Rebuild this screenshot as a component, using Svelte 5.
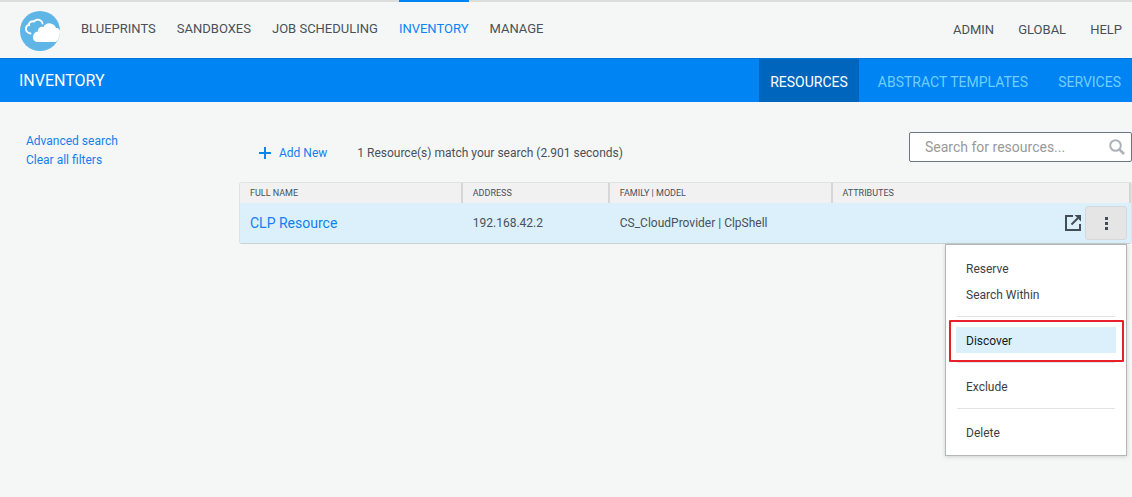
<script>
	let search = '';
	let menuOpen = true;

	const mainNav = ['Blueprints', 'Sandboxes', 'Job Scheduling', 'Inventory', 'Manage'];
	const userNav = ['Admin', 'Global', 'Help'];
	const tabs = ['Resources', 'Abstract Templates', 'Services'];

	const resources = [
		{ name: 'CLP Resource', address: '192.168.42.2', model: 'CS_CloudProvider | ClpShell', attributes: '' }
	];

	const menuGroups = [['Reserve', 'Search Within'], ['Discover'], ['Exclude'], ['Delete']];
</script>

<div class="app">
	<header class="topbar">
		<a class="logo" href="#home" aria-label="Home">
			<svg width="41" height="40" viewBox="0 0 41 40">
				<circle cx="20" cy="20" r="20" fill="#5eb5e6" />
				<path
					d="M10.500 22.500C7 22 5.500 19.500 6 17C6.500 15 8 14 9 14C8.500 11.500 11.500 9.500 14 10.500C15.500 8.500 18.500 8 20.500 9.500C22 10.500 22.500 11.500 22.500 12.500"
					fill="none"
					stroke="#fff"
					stroke-width="1.900"
					stroke-linecap="round"
				/>
				<path
					d="M18 31C14.500 31 12.500 28.500 13 25.500C13.300 22.500 15.500 20.500 18 20.500C17.500 17 21 15 23.500 16C25 12.500 29 11.500 32 13C34.500 14 35.500 15.500 36 17C38 16.500 40 18.500 40 20.500C40 25 38.500 28.500 36 31Z"
					fill="#fff"
				/>
			</svg>
		</a>
		<nav class="main-nav">
			{#each mainNav as item}
				<a href="#{item}" class:active={item === 'Inventory'}>{item}</a>
			{/each}
		</nav>
		<nav class="user-nav">
			{#each userNav as item}
				<a href="#{item}">{item}</a>
			{/each}
		</nav>
	</header>

	<div class="titlebar">
		<h1>Inventory</h1>
		<nav class="tabs">
			{#each tabs as tab, i}
				<a href="#{tab}" class:active={i === 0}>{tab}</a>
			{/each}
		</nav>
	</div>

	<div class="page">
		<aside>
			<a href="#advanced">Advanced search</a>
			<a href="#clear">Clear all filters</a>
		</aside>

		<main>
			<div class="toolbar">
				<button class="add" type="button">
					<svg width="12" height="12" viewBox="0 0 12 12">
						<path d="M6 0V12M0 6H12" stroke="#0a84f0" stroke-width="2" />
					</svg>
					Add New
				</button>
				<span class="summary">1 Resource(s) match your search (2.901 seconds)</span>
				<div class="search">
					<input type="text" aria-label="Search for resources" placeholder="Search for resources..." bind:value={search} />
					<svg width="16" height="16" viewBox="0 0 16 16" fill="none" stroke="#abb2ba">
						<circle cx="6.500" cy="6.500" r="5.300" stroke-width="2" />
						<path d="M10.300 10.300L15 15" stroke-width="2.600" />
					</svg>
				</div>
			</div>

			<table>
				<thead>
					<tr>
						<th class="col-name">Full Name</th>
						<th class="col-address">Address</th>
						<th class="col-model">Family | Model</th>
						<th>Attributes</th>
					</tr>
				</thead>
				<tbody>
					{#each resources as resource}
						<tr>
							<td><a class="name" href="#resource">{resource.name}</a></td>
							<td>{resource.address}</td>
							<td>{resource.model}</td>
							<td>
								<div class="actions">
									{resource.attributes}
									<button class="open" type="button" aria-label="Open">
										<svg width="16" height="16" viewBox="0 0 16 16" fill="none" stroke="#434d58" stroke-width="2">
											<path d="M8 1H1V15H15V9" />
											<path d="M6.500 9.500L13 3" />
											<path d="M9.500 0H16V6.500Z" fill="#434d58" stroke="none" />
										</svg>
									</button>
									<div class="more">
										<button
											class="dots"
											type="button"
											aria-label="More actions"
											aria-expanded={menuOpen}
											on:click={() => (menuOpen = !menuOpen)}
										>
											<svg width="3" height="13" viewBox="0 0 3 13" fill="#434d58">
												<path d="M0 0H3V3H0ZM0 5H3V8H0ZM0 10H3V13H0Z" />
											</svg>
										</button>
										{#if menuOpen}
											<div class="menu">
												{#each menuGroups as group, i}
													{#if i > 0}
														<hr />
													{/if}
													{#each group as action}
														<button type="button" class:selected={action === 'Discover'}>{action}</button>
													{/each}
												{/each}
											</div>
										{/if}
									</div>
								</div>
							</td>
						</tr>
					{/each}
				</tbody>
			</table>
		</main>
	</div>
</div>

<style>
	:global(body) {
		background: #f5f7f6;
	}

	.app {
		min-height: 100vh;
		color: #4a505a;
		font-family: Roboto, 'Liberation Sans', sans-serif;
		font-size: 12px;
	}

	a {
		color: #147fec;
		text-decoration: none;
	}

	button {
		padding: 0;
		border: 0;
		background: none;
		color: inherit;
		font: inherit;
		cursor: pointer;
	}

	svg {
		display: block;
	}

	.topbar {
		display: flex;
		box-sizing: border-box;
		height: 58px;
		padding: 0 10px 0 20px;
		border-top: 2px solid #dcdddc;
	}

	.logo {
		padding-top: 9px;
		margin-right: 20px;
	}

	.main-nav,
	.user-nav {
		display: flex;
		font-size: 13px;
		text-transform: uppercase;
	}

	.main-nav {
		gap: 21px;
	}

	.user-nav {
		gap: 24px;
		margin-left: auto;
	}

	.main-nav a,
	.user-nav a {
		margin-top: -2px;
		border-top: 2px solid transparent;
		color: #4a505a;
		line-height: 54px;
	}

	.user-nav a {
		line-height: 56px;
	}

	.main-nav a.active {
		border-color: #0083f3;
		color: #0a84f5;
	}

	.titlebar {
		display: flex;
		justify-content: space-between;
		box-sizing: border-box;
		height: 44px;
		padding-left: 19px;
		border-top: 1px solid #0073d9;
		background: #0083f3;
		text-transform: uppercase;
	}

	h1 {
		margin: 0;
		color: #fff;
		font-size: 16px;
		font-weight: 400;
		line-height: 43px;
	}

	.tabs {
		display: flex;
		gap: 8px;
	}

	.tabs a {
		padding: 0 11px;
		color: #6fd0ff;
		font-size: 14px;
		line-height: 46px;
		height: 43px;
	}

	.tabs a.active {
		background: #0066bd;
		color: #fff;
	}

	.page {
		display: grid;
		grid-template-columns: 239px 1fr;
		padding-top: 30px;
	}

	aside {
		display: flex;
		flex-direction: column;
		align-items: flex-start;
		padding-left: 26px;
		line-height: 19px;
	}

	.toolbar {
		display: flex;
		align-items: center;
		height: 30px;
		padding-left: 20px;
		margin-bottom: 20px;
	}

	.add {
		display: flex;
		align-items: center;
		gap: 8px;
		margin-top: 11px;
		color: #147fec;
	}

	.summary {
		margin: 11px 0 0 30px;
	}

	.search {
		display: flex;
		align-items: center;
		box-sizing: border-box;
		width: 223px;
		height: 30px;
		padding: 0 6px 0 15px;
		margin-left: auto;
		border: 1px solid #6b7785;
		border-radius: 2px;
		background: #fff;
	}

	.search input {
		flex: 1;
		min-width: 0;
		padding: 0;
		border: 0;
		outline: none;
		background: none;
		color: #4a505a;
		font: inherit;
		font-size: 14px;
	}

	.search input::placeholder {
		color: #999;
	}

	table {
		width: 100%;
		table-layout: fixed;
		border: 1px solid #dfe2e1;
		border-bottom-color: #c9d0d4;
		border-radius: 3px;
		border-spacing: 0;
	}

	th {
		height: 20px;
		padding: 0 0 0 10px;
		border-right: 2px solid #d6d6d6;
		box-sizing: border-box;
		background: #f1f1f1;
		font-size: 9px;
		font-weight: 400;
		text-align: left;
		text-transform: uppercase;
	}

	.col-name,
	.col-model {
		width: 25%;
	}

	.col-address {
		width: 16.5%;
	}

	td {
		height: 40px;
		padding: 0 0 0 10px;
		background: #dbf0fb;
	}

	.name {
		font-size: 14px;
	}

	.actions {
		display: flex;
		align-items: center;
		justify-content: flex-end;
		gap: 4px;
		padding-right: 4px;
	}

	.more {
		position: relative;
	}

	.dots {
		display: flex;
		align-items: center;
		justify-content: center;
		box-sizing: border-box;
		width: 42px;
		height: 34px;
		border: 1px solid #d6d9db;
		border-radius: 3px;
		background: #e5e5e5;
	}

	.menu {
		position: absolute;
		top: 38px;
		right: 0;
		z-index: 1;
		box-sizing: border-box;
		width: 182px;
		padding: 10px;
		border: 1px solid #b4b6b8;
		background: #fff;
		box-shadow: 0 1px 4px rgba(0, 0, 0, 0.15);
		color: #3b3f45;
	}

	.menu button {
		display: block;
		width: 100%;
		height: 26px;
		padding: 2px 10px 0;
		text-align: left;
	}

	.menu hr {
		height: 1px;
		margin: 9px 1px 10px;
		border: 0;
		background: #e2e3e4;
	}

	.menu .selected {
		position: relative;
		background: #dbf0fb;
		color: #16191d;
	}

	/* red frame around the chosen action */
	.menu .selected::after {
		content: '';
		position: absolute;
		inset: -7px -8px -9px -7px;
		border: 2px solid #e8202a;
		border-radius: 1px;
	}
</style>
